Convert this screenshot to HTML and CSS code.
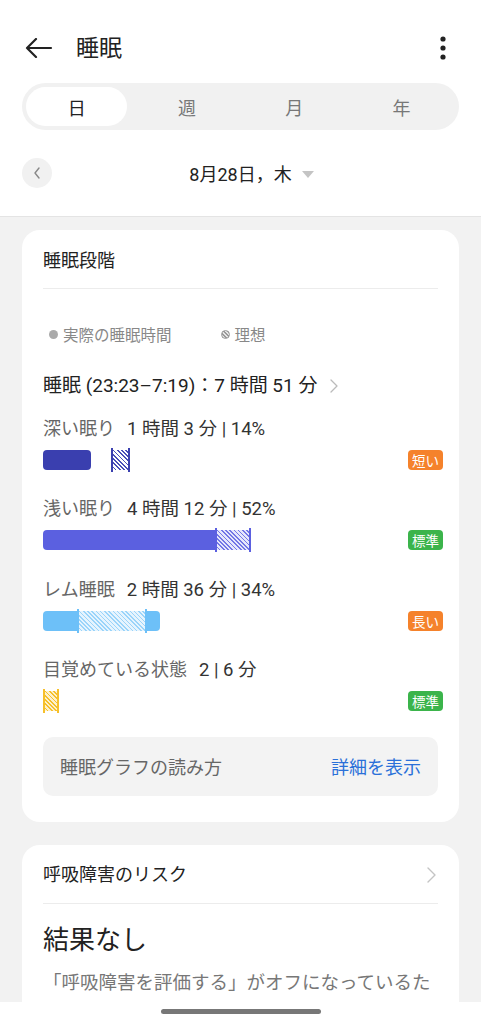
FILE: index.html
```html
<!DOCTYPE html>
<html lang="ja">
<head>
    <meta charset="UTF-8">
    <meta name="viewport" content="width=device-width, initial-scale=1.0">
    <title>睡眠</title>
    <link rel="stylesheet" href="styles.css">
</head>
<body>
<div class="screen">
    <div class="content">
        <header class="header">
            <div class="topbar">
                <svg class="back" width="28" height="20" viewBox="0 0 28 20">
                    <path d="M2 10 H26 M11 1 L2 10 L11 19" fill="none" stroke="#222" stroke-width="2.2" stroke-linecap="round" stroke-linejoin="round"/>
                </svg>
                <h1 class="title">睡眠</h1>
                <svg class="more" width="6" height="24" viewBox="0 0 6 24">
                    <circle cx="3" cy="3" r="2.6" fill="#222"/>
                    <circle cx="3" cy="12" r="2.6" fill="#222"/>
                    <circle cx="3" cy="21" r="2.6" fill="#222"/>
                </svg>
            </div>

            <div class="tabs">
                <a class="tab active" href="#">日</a>
                <a class="tab" href="#">週</a>
                <a class="tab" href="#">月</a>
                <a class="tab" href="#">年</a>
            </div>

            <div class="date-row">
                <span class="round-btn">
                    <svg width="10" height="14" viewBox="0 0 10 14">
                        <path d="M7 2 L3 7 L7 12" fill="none" stroke="#888" stroke-width="1.4" stroke-linecap="round" stroke-linejoin="round"/>
                    </svg>
                </span>
                <div class="date">8月28日，木<span class="caret"></span></div>
                <span></span>
            </div>
        </header>

        <section class="card">
            <h2 class="card-title">睡眠段階</h2>

            <div class="legend">
                <span class="legend-item"><span class="dot"></span>実際の睡眠時間</span>
                <span class="legend-item"><span class="dot hatch-dot"></span>理想</span>
            </div>

            <div class="summary">睡眠 (23:23–7:19)：7 時間 51 分
                <svg class="chev" width="10" height="16" viewBox="0 0 10 16">
                    <path d="M2 2 L8 8 L2 14" fill="none" stroke="#bbb" stroke-width="1.3" stroke-linecap="round" stroke-linejoin="round"/>
                </svg>
            </div>

            <div class="stage deep">
                <div class="stage-head"><span class="stage-name">深い眠り</span><span class="stage-value">1 時間 3 分 | 14%</span></div>
                <div class="stage-bar">
                    <div class="track">
                        <div class="actual" style="width: 48px;"></div>
                        <div class="ideal" style="margin-left: 68px; width: 19px;"></div>
                    </div>
                    <span class="badge orange">短い</span>
                </div>
            </div>

            <div class="stage light">
                <div class="stage-head"><span class="stage-name">浅い眠り</span><span class="stage-value">4 時間 12 分 | 52%</span></div>
                <div class="stage-bar">
                    <div class="track">
                        <div class="actual" style="width: 175px;"></div>
                        <div class="ideal" style="margin-left: 172px; width: 36px;"></div>
                    </div>
                    <span class="badge green">標準</span>
                </div>
            </div>

            <div class="stage rem">
                <div class="stage-head"><span class="stage-name">レム睡眠</span><span class="stage-value">2 時間 36 分 | 34%</span></div>
                <div class="stage-bar">
                    <div class="track">
                        <div class="actual" style="width: 117px;"></div>
                        <div class="ideal" style="margin-left: 34px; width: 70px;"></div>
                    </div>
                    <span class="badge orange">長い</span>
                </div>
            </div>

            <div class="stage awake">
                <div class="stage-head"><span class="stage-name">目覚めている状態</span><span class="stage-value">2 | 6 分</span></div>
                <div class="stage-bar">
                    <div class="track">
                        <div class="ideal" style="margin-left: 0; width: 16px;"></div>
                    </div>
                    <span class="badge green">標準</span>
                </div>
            </div>

            <div class="info-box">
                <span>睡眠グラフの読み方</span>
                <a href="#" class="link">詳細を表示</a>
            </div>
        </section>

        <section class="card">
            <div class="card-title row">
                <span>呼吸障害のリスク</span>
                <svg width="12" height="18" viewBox="0 0 12 18">
                    <path d="M2 2 L9 9 L2 16" fill="none" stroke="#c4c4c4" stroke-width="1.4" stroke-linecap="round" stroke-linejoin="round"/>
                </svg>
            </div>
            <div class="result">結果なし</div>
            <p class="desc">「呼吸障害を評価する」がオフになっているため、呼吸障害のリスクは正しく評価できません。運動中や睡眠中の状態を確認してください。</p>
        </section>
    </div>
    <div class="gesture-bar"><span class="handle"></span></div>
</div>
</body>
</html>
```

FILE: styles.css
```css
* {
    box-sizing: border-box;
}

body {
    margin: 0;
    padding: 0;
    font-family: Roboto, "Noto Sans CJK JP", sans-serif;
    color: #222;
    background-color: #f2f2f2;
}

.screen {
    height: 1024px;
    overflow: hidden;
    display: flex;
    flex-direction: column;
}

.content {
    flex: 1;
    overflow: hidden;
}

/* header */

.header {
    background-color: #fff;
    padding: 24px 22px 28px;
    border-bottom: 1px solid #e4e4e4;
}

.topbar {
    height: 48px;
    display: flex;
    align-items: center;
}

.back {
    margin-left: 3px;
}

.title {
    flex: 1;
    margin: 0 0 0 23px;
    font-size: 23px;
    font-weight: 400;
    line-height: 1;
}

.more {
    margin-right: 13px;
}

.tabs {
    margin-top: 11px;
    height: 47px;
    padding: 4px;
    border-radius: 24px;
    background-color: #f1f1f1;
    display: grid;
    grid-template-columns: repeat(4, 1fr);
}

.tab {
    display: flex;
    align-items: center;
    justify-content: center;
    color: #777;
    text-decoration: none;
    font-size: 18px;
    border-radius: 20px;
}

.tab.active {
    background-color: #fff;
    color: #222;
    margin-right: 6px;
}

.date-row {
    margin-top: 28px;
    height: 30px;
    display: grid;
    grid-template-columns: 30px 1fr 30px;
    align-items: center;
}

.round-btn {
    width: 30px;
    height: 30px;
    border-radius: 50%;
    background-color: #f1f1f1;
    display: flex;
    align-items: center;
    justify-content: center;
}

.date {
    text-align: center;
    font-size: 18px;
    color: #222;
}

.caret {
    display: inline-block;
    margin-left: 10px;
    margin-right: -22px;
    border-left: 6px solid transparent;
    border-right: 6px solid transparent;
    border-top: 7px solid #c4c4c4;
    vertical-align: 3px;
}

/* cards */

.card {
    margin: 13px 22px 23px;
    padding: 19px 21px 26px;
    background-color: #fff;
    border-radius: 18px;
}

.card-title {
    margin: 0;
    padding-bottom: 15px;
    border-bottom: 1px solid #ececec;
    font-size: 18px;
    font-weight: 400;
    line-height: 24px;
}

.card-title.row {
    display: flex;
    justify-content: space-between;
    align-items: center;
    margin-top: -1px;
    padding-bottom: 16px;
}

.legend {
    margin-top: 35px;
    height: 20px;
    display: flex;
    gap: 43px;
    font-size: 15.5px;
    color: #888;
}

.legend-item {
    display: flex;
    align-items: center;
}

.dot {
    width: 9px;
    height: 9px;
    border-radius: 50%;
    background-color: #aaa;
    margin: 0 5px 0 6px;
}

.hatch-dot {
    background: repeating-linear-gradient(45deg, #999 0 1.2px, #e6e6e6 1.2px 2.6px);
    border: 1px solid #999;
}

.summary {
    margin-top: 30px;
    line-height: 24px;
    font-size: 19px;
    display: flex;
    align-items: center;
}

.chev {
    margin-left: 12px;
}

.stage {
    margin-top: 19px;
}

.stage + .stage {
    margin-top: 25.3px;
}

.stage-head {
    line-height: 24px;
    font-size: 18px;
}

.stage-name {
    color: #666;
    margin-right: 12px;
}

.stage-value {
    color: #333;
    font-size: 18.5px;
}

.stage-bar {
    margin-top: 7px;
    height: 24px;
    display: flex;
    justify-content: space-between;
    align-items: center;
}

.track {
    flex: 1;
    height: 24px;
    display: grid;
    align-items: center;
}

.track > div {
    grid-area: 1 / 1;
    height: 20px;
}

.actual {
    border-radius: 4px;
}

.ideal {
    border-left: 2px solid;
    border-right: 2px solid;
    height: 24px !important;
    background-clip: content-box;
    padding: 2px 0;
}

.deep .actual { background-color: #3a3faf; }
.deep .ideal {
    border-color: #3a3faf;
    background-image: repeating-linear-gradient(45deg, #4a4fb8 0 1.1px, #fff 1.1px 3px);
}

.light .actual { background-color: #5b60e0; border-radius: 4px 0 0 4px; }
.light .ideal {
    border-color: #5b60e0;
    background-image: repeating-linear-gradient(45deg, #7377e6 0 1.1px, #e6e7fb 1.1px 3px);
}

.rem .actual { background-color: #6dc0f8; }
.rem .ideal {
    border-color: #6dc0f8;
    background-image: repeating-linear-gradient(45deg, #9ad4fa 0 1.1px, #e6f4fe 1.1px 3px);
}

.awake .ideal {
    border-color: #f6c02c;
    background-image: repeating-linear-gradient(45deg, #f6c02c 0 1.1px, #fdf1cc 1.1px 3px);
}

.badge {
    width: 35px;
    height: 20px;
    border-radius: 4px;
    color: #fff;
    font-size: 13.5px;
    display: flex;
    align-items: center;
    justify-content: center;
    margin-right: -5px;
}

.badge.orange { background-color: #f5822b; }
.badge.green { background-color: #3bb44b; }

.info-box {
    margin-top: 24px;
    height: 59px;
    padding: 0 17px;
    border-radius: 10px;
    background-color: #f3f3f3;
    display: flex;
    justify-content: space-between;
    align-items: center;
    font-size: 18px;
    color: #666;
}

.link {
    color: #2a70d9;
    text-decoration: none;
}

.result {
    margin-top: 18px;
    font-size: 26px;
    line-height: 36px;
    color: #222;
}

.desc {
    margin: 10px 0 0;
    font-size: 18.5px;
    line-height: 30px;
    color: #777;
}

/* bottom gesture bar */

.gesture-bar {
    height: 22px;
    background-color: #fff;
    display: flex;
    justify-content: center;
    padding-top: 7px;
}

.handle {
    width: 160px;
    height: 5px;
    border-radius: 3px;
    background-color: #777;
}
```
